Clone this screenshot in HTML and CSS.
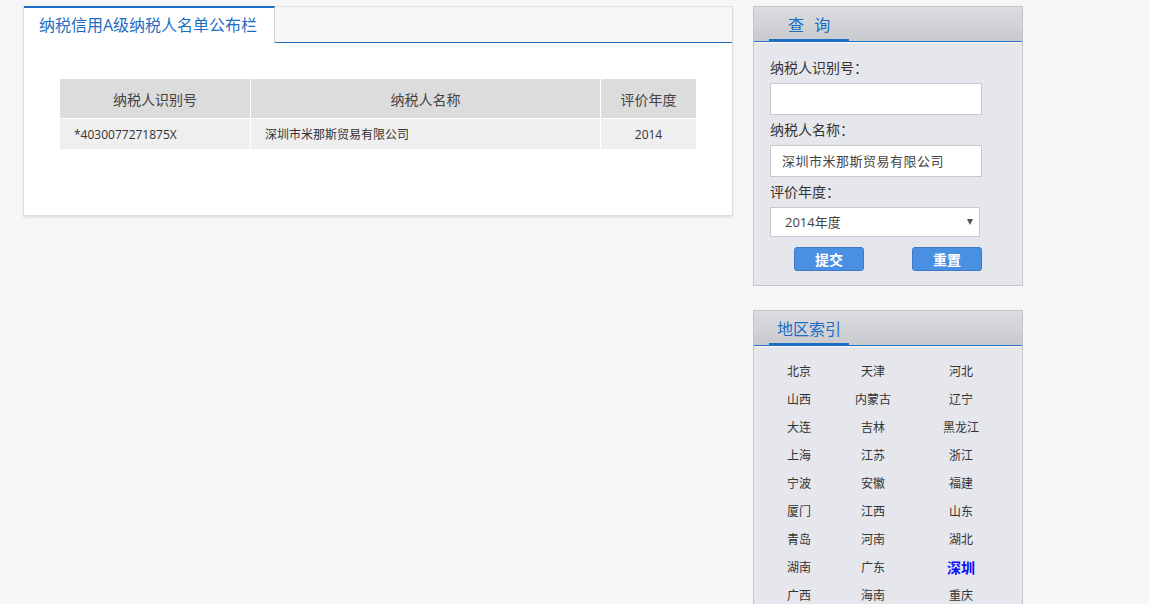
FILE: index.html
```html
<!DOCTYPE html>
<html lang="zh-CN">
<head>
<meta charset="utf-8">
<title>纳税信用A级纳税人名单公布栏</title>
<link rel="stylesheet" href="styles.css">
</head>
<body>
<div class="page">
  <div class="main-panel">
    <div class="panel-head">
      <div class="tab">纳税信用A级纳税人名单公布栏</div>
      <div class="head-rest"></div>
    </div>
    <table class="result">
      <thead>
        <tr>
          <th class="c1">纳税人识别号</th>
          <th class="c2">纳税人名称</th>
          <th class="c3">评价年度</th>
        </tr>
      </thead>
      <tbody>
        <tr>
          <td class="c1 left">*4030077271875X</td>
          <td class="c2 left">深圳市米那斯贸易有限公司</td>
          <td class="c3">2014</td>
        </tr>
      </tbody>
    </table>
  </div>

  <div class="side">
    <div class="box query">
      <div class="box-head"><span class="box-title spaced">查 询</span></div>
      <div class="box-body form">
        <div class="label">纳税人识别号：</div>
        <div class="field"></div>
        <div class="label">纳税人名称：</div>
        <div class="field filled">深圳市米那斯贸易有限公司</div>
        <div class="label">评价年度：</div>
        <div class="select">2014年度</div>
        <div class="buttons">
          <button class="btn">提交</button>
          <button class="btn">重置</button>
        </div>
      </div>
    </div>

    <div class="box region">
      <div class="box-head"><span class="box-title">地区索引</span></div>
      <div class="box-body">
        <div class="grid">
          <span>北京</span><span>天津</span><span>河北</span>
          <span>山西</span><span>内蒙古</span><span>辽宁</span>
          <span>大连</span><span>吉林</span><span>黑龙江</span>
          <span>上海</span><span>江苏</span><span>浙江</span>
          <span>宁波</span><span>安徽</span><span>福建</span>
          <span>厦门</span><span>江西</span><span>山东</span>
          <span>青岛</span><span>河南</span><span>湖北</span>
          <span>湖南</span><span>广东</span><span class="active">深圳</span>
          <span>广西</span><span>海南</span><span>重庆</span>
        </div>
      </div>
    </div>
  </div>
</div>
</body>
</html>
```

FILE: styles.css
```css
html, body {
  margin: 0;
  padding: 0;
  background: #f6f6f6;
  font-family: "Open Sans", "Noto Sans CJK SC", sans-serif;
  color: #333;
  overflow: hidden;
}

.page {
  display: flex;
  align-items: flex-start;
  padding: 6px 0 0 23px;
  gap: 20px;
}

/* ---------- main panel ---------- */
.main-panel {
  width: 708px;
  height: 209px;
  background: #fff;
  border: 1px solid #dddddd;
  border-top: none;
  box-shadow: 0 2px 2px rgba(0, 0, 0, 0.08);
}

.panel-head {
  display: flex;
  height: 37px;
}

.tab {
  width: 235px;
  padding-left: 15px;
  border-top: 2px solid #1c6dc3;
  border-right: 1px solid #d2d2d2;
  background: #fff;
  color: #1c6dc3;
  font-size: 16px;
  line-height: 35px;
  white-space: nowrap;
}

.head-rest {
  flex: 1;
  background: #f7f7f7;
  border-top: 1px solid #e2e2e2;
  border-bottom: 1px solid #1c6dc3;
}

.result {
  margin: 35px 0 0 35px;
  border-collapse: collapse;
  width: 636px;
  table-layout: fixed;
}

.result th,
.result td {
  border: 1px solid #fff;
  padding: 0;
  text-align: center;
  font-weight: normal;
}

.result th {
  background: #dcdcdc;
  height: 39px;
  font-size: 14px;
  color: #444;
}

.result td {
  background: #efefef;
  height: 30px;
  font-size: 12px;
  color: #333;
}

.result td.left {
  text-align: left;
  padding-left: 14px;
}

.result .c1 { width: 190px; }
.result .c2 { width: 349px; }
.result .c3 { width: 95px; }

/* ---------- side boxes ---------- */
.side {
  display: flex;
  flex-direction: column;
  gap: 24px;
}

.box {
  width: 268px;
  border: 1px solid #c5c6ca;
  background: #e6e7ec;
}

.box-head {
  height: 34px;
  background: linear-gradient(#dcdde1, #c9cace);
  border-bottom: 1px solid #1c6dc3;
  box-shadow: 0 1px 0 #fbfbfd;
  padding-left: 15px;
  display: flex;
  align-items: flex-end;
}

.box-title {
  display: block;
  width: 80px;
  height: 31px;
  border-bottom: 3px solid #1c6dc3;
  margin-bottom: -1px;
  color: #1c6dc3;
  font-size: 16px;
  line-height: 29px;
  padding-left: 8px;
  box-sizing: border-box;
  white-space: nowrap;
}

.box-title.spaced {
  padding-left: 19px;
  letter-spacing: 3px;
}

.box-body {
  margin-top: 1px;
}

.form {
  padding: 15px 0 14px 16px;
}

.label {
  height: 20px;
  line-height: 20px;
  font-size: 14px;
  color: #333;
  margin-bottom: 5px;
}

.field {
  width: 212px;
  height: 32px;
  box-sizing: border-box;
  background: #fff;
  border: 1px solid #c8c9cc;
  margin-bottom: 5px;
  padding-left: 11px;
  font-size: 13px;
  line-height: 30px;
  color: #444;
  letter-spacing: 0.5px;
}

.select {
  position: relative;
  width: 210px;
  height: 30px;
  box-sizing: border-box;
  background: #fff;
  border: 1px solid #c8c9cc;
  padding-left: 14px;
  font-size: 13px;
  line-height: 28px;
  color: #444;
}

.select::after {
  content: "";
  position: absolute;
  right: 6px;
  top: 11px;
  border-left: 3.5px solid transparent;
  border-right: 3.5px solid transparent;
  border-top: 6px solid #555;
}

.buttons {
  display: flex;
  gap: 48px;
  padding-left: 24px;
  margin-top: 10px;
}

.btn {
  width: 70px;
  height: 24px;
  padding: 0;
  background: #4a90e2;
  border: 1px solid #3f7ac2;
  border-radius: 3px;
  color: #fff;
  font-family: "Noto Sans CJK SC", sans-serif;
  font-size: 14px;
  font-weight: bold;
  line-height: 22px;
}

.region .box-body {
  height: 280px;
}

.grid {
  display: grid;
  grid-template-columns: 58px 58px 86px;
  column-gap: 16px;
  grid-auto-rows: 28px;
  padding: 11px 0 0 16px;
}

.grid span {
  text-align: center;
  font-size: 12px;
  line-height: 28px;
  color: #333;
}

.grid span.active {
  color: #0b0bff;
  font-size: 14px;
  font-weight: bold;
}
```
